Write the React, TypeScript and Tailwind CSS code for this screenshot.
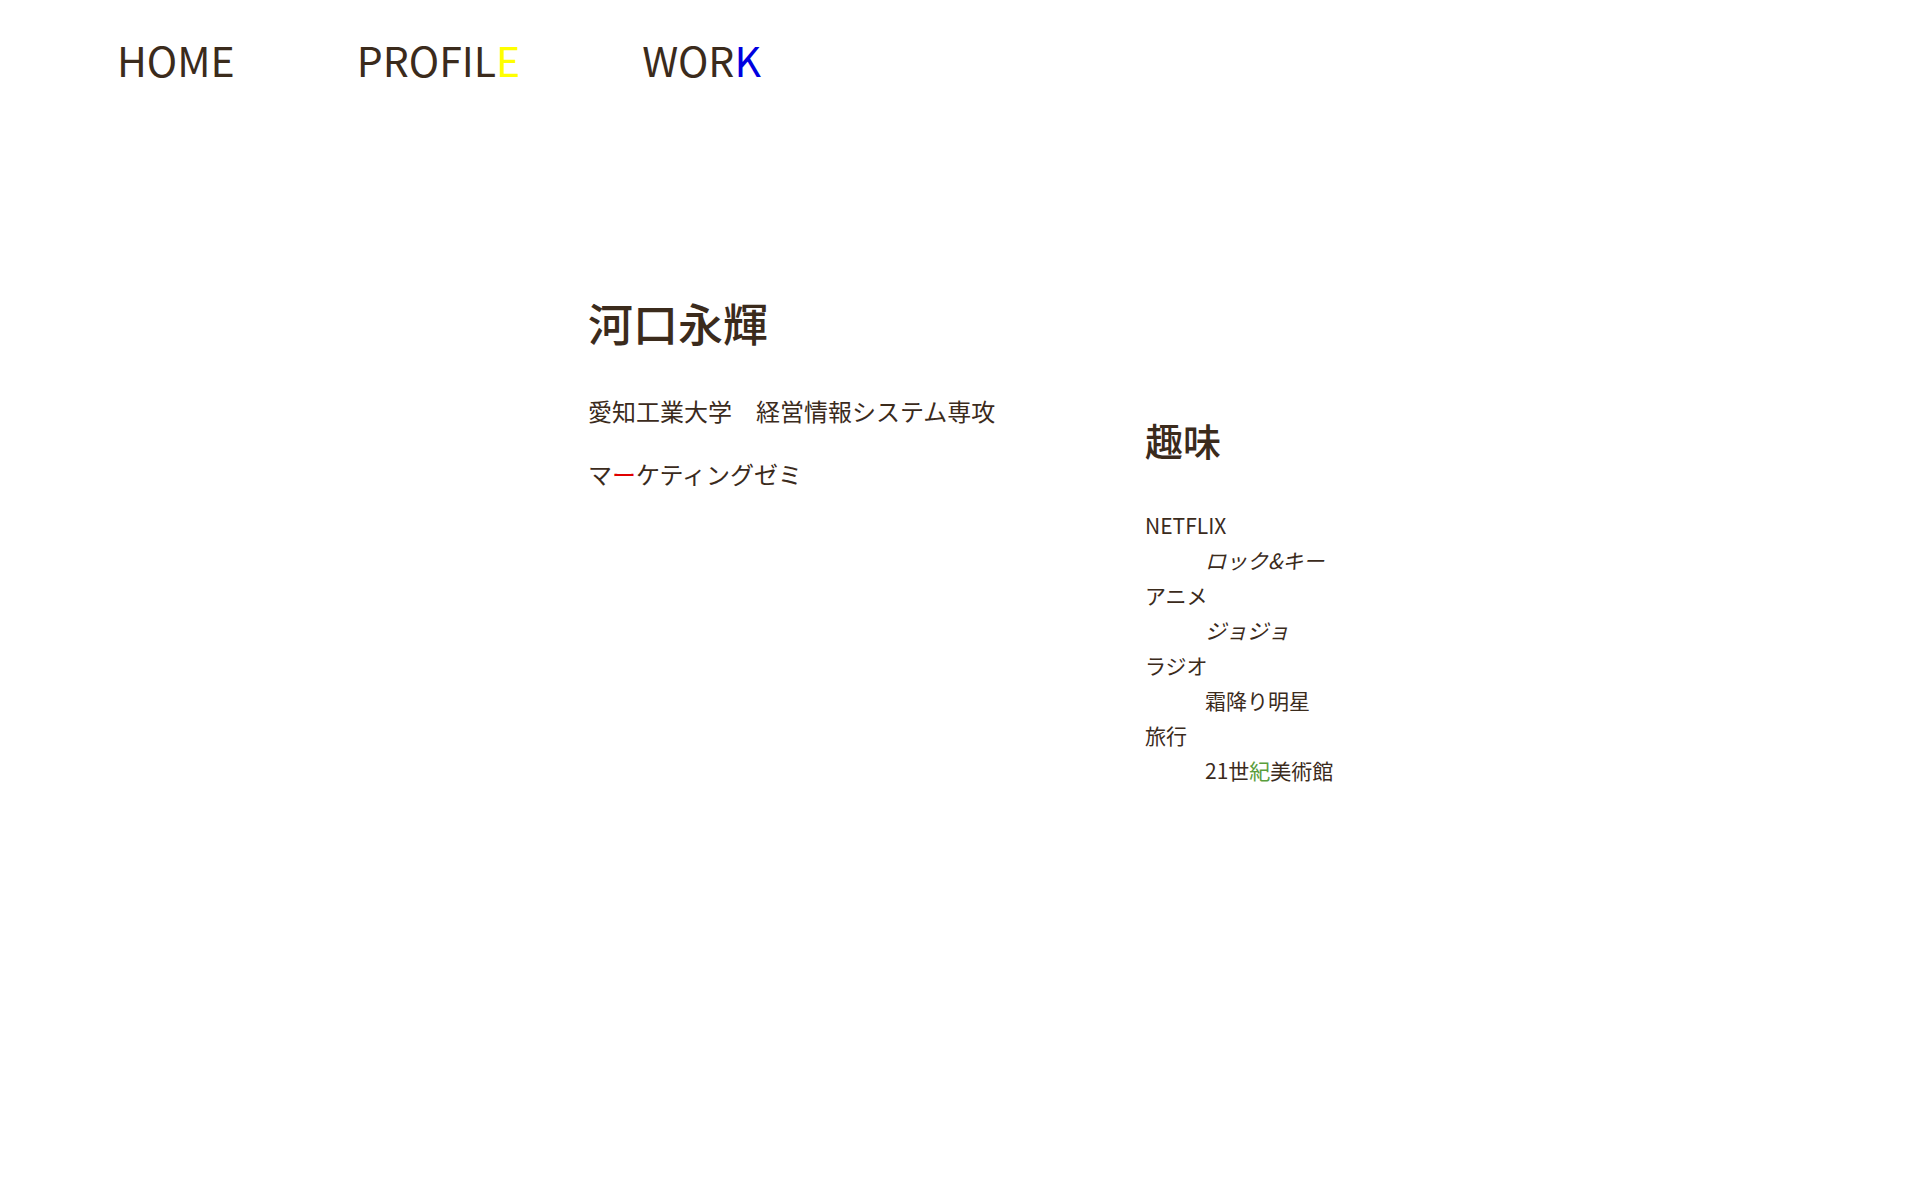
const hobbies = [
  { label: "NETFLIX", item: <span className="italic">ロック&amp;キー</span> },
  { label: "アニメ", item: <span className="italic">ジョジョ</span> },
  { label: "ラジオ", item: <span>霜降り明星</span> },
  {
    label: "旅行",
    item: (
      <span>
        21世<span className="text-[#5a9e3c]">紀</span>美術館
      </span>
    ),
  },
]

export default function App() {
  return (
    <div className="min-h-screen bg-white text-[#3b2b1c] font-['Noto_Sans_CJK_JP',sans-serif]">
      {/* Header nav */}
      <nav className="flex gap-[122px] pl-[117px] pt-[39px] text-[41px] leading-none">
        <a href="#home">HOME</a>
        <a href="#profile">
          PROFIL<span className="text-[#ffff00]">E</span>
        </a>
        <a href="#work">
          WOR<span className="text-[#0000e0]">K</span>
        </a>
      </nav>

      <main className="mx-auto mt-[220px] flex w-[744px]">
        <section className="w-[557px] shrink-0">
          <h1 className="text-[45px] font-medium leading-none">河口永輝</h1>
          <p className="mt-[54px] text-[24px] leading-none">愛知工業大学　経営情報システム専攻</p>
          <p className="mt-[39px] text-[24px] leading-none">
            マ<span className="text-[#e00000]">ー</span>ケティングゼミ
          </p>
        </section>

        <section className="pt-[121px] whitespace-nowrap">
          <h2 className="text-[38px] font-medium leading-none">趣味</h2>
          <dl className="mt-[49px] text-[21px] leading-[35px]">
            {hobbies.map((h) => (
              <div key={h.label}>
                <dt>{h.label}</dt>
                <dd className="pl-[60px]">{h.item}</dd>
              </div>
            ))}
          </dl>
        </section>
      </main>
    </div>
  )
}
